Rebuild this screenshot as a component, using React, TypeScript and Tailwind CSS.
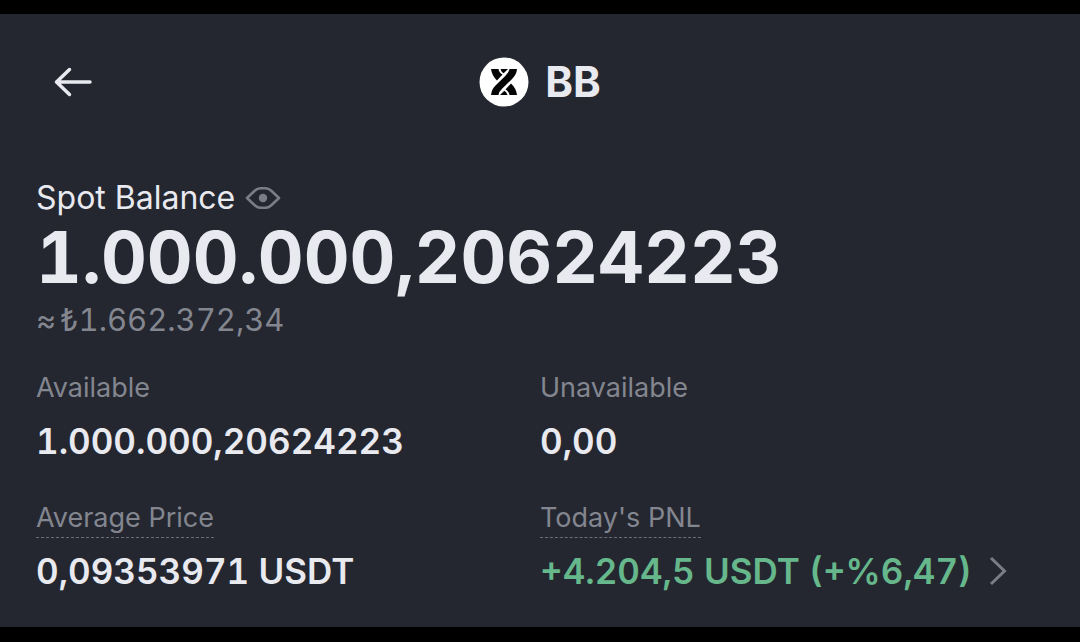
import type { ReactNode } from 'react';
import { clsx } from 'clsx';

function BackIcon() {
  return (
    <svg viewBox="0 0 40 32" className="h-8 w-10" fill="none" stroke="currentColor" strokeWidth="3.5" strokeLinecap="round" strokeLinejoin="round" aria-hidden="true">
      <path d="M15.5 3.5 2.5 16l13 12.500M3 16h33" />
    </svg>
  );
}

function CoinLogo() {
  return (
    <svg viewBox="0 0 50 50" className="size-[50px]" fill="none" aria-hidden="true">
      <circle cx="25" cy="25" r="24.5" fill="#fff" />
      <g fill="#050505">
        <path d="M12 12h7.500q.5 3.500 4 5.500l-5.500 6q-5-4.500-6-11.500z" />
        <path d="M21.500 12h7.500l-4.300 4.300q-2.500-1.300-3.200-4.300z" />
        <path d="M38 38h-7.500q-.5-3.500-4-5.500l5.500-6q5 4.500 6 11.500z" />
        <path d="M28.500 38h-7.500l4.300-4.300q2.500 1.300 3.200 4.300z" />
        <path d="M30.500 12H38q-.5 5.500-4.500 9.500l-10 9.800q-3.500 3.200-4 6.700H12q.5-5.500 4.500-9.500l10-9.800q3.500-3.200 4-6.700z" />
      </g>
    </svg>
  );
}

function EyeIcon() {
  return (
    <svg viewBox="0 0 36 24" className="h-6 w-9" fill="none" aria-hidden="true">
      <path d="M2 12 10 4.500Q12.500 2.200 15.500 2.200h5Q23.500 2.200 26 4.500L34 12l-8 7.500q-2.500 2.300-5.500 2.300h-5q-3 0-5.500-2.300z" stroke="currentColor" strokeWidth="2.600" strokeLinejoin="round" />
      <circle cx="18" cy="12" r="4.200" fill="currentColor" />
    </svg>
  );
}

function ChevronIcon() {
  return (
    <svg viewBox="0 0 20 32" className="h-8 w-5" fill="none" stroke="currentColor" strokeWidth="3" aria-hidden="true">
      <path d="m3 3 13.500 13L3 29" />
    </svg>
  );
}

interface StatProps {
  label: string;
  hint?: boolean;
  children: ReactNode;
}

function Stat({ label, hint, children }: StatProps) {
  return (
    <div>
      <dt className="h-10 text-[27px] leading-8 text-[#83868f]">
        <span className={clsx('inline-block', hint && 'h-9 border-b border-dashed border-[#6b6e78]')}>
          {label}
        </span>
      </dt>
      <dd className="mt-2 text-[35px] font-semibold leading-[42px] tabular-nums">{children}</dd>
    </div>
  );
}

export default function App() {
  return (
    <main className="flex min-h-screen flex-col border-t-[14px] border-b-[15px] border-black bg-[#242730] font-['Inter','Liberation_Sans',sans-serif] text-[#e9eaf0]">
      <header className="grid h-[136px] grid-cols-[1fr_auto_1fr] items-center px-[54px]">
        <button type="button" aria-label="Back" className="w-fit">
          <BackIcon />
        </button>
        <h1 className="flex items-center gap-4 text-[42px] font-bold leading-none">
          <CoinLogo />
          BB
        </h1>
      </header>

      <section className="px-9 pt-7">
        <div className="flex items-center gap-[10px] text-[32px] leading-10">
          <span>Spot Balance</span>
          <button type="button" aria-label="Hide balance" className="text-[#7a7d87]">
            <EyeIcon />
          </button>
        </div>
        <p className="text-[71px] font-bold leading-[78px] tabular-nums">1.000.000,20624223</p>
        <p className="mt-1 flex gap-1 text-[31px] leading-10 tabular-nums text-[#83868f]">
          <span>≈</span>
          <span>₺1.662.372,34</span>
        </p>

        <dl className="mt-8 grid grid-cols-2 gap-y-10">
          <Stat label="Available">1.000.000,20624223</Stat>
          <Stat label="Unavailable">0,00</Stat>
          <Stat label="Average Price" hint>
            0,09353971 USDT
          </Stat>
          <Stat label="Today's PNL" hint>
            <a href="#pnl" className="flex items-center gap-4 whitespace-nowrap text-[#66b78b]">
              +4.204,5 USDT (+%6,47)
              <span className="text-[#7a7d87]">
                <ChevronIcon />
              </span>
            </a>
          </Stat>
        </dl>
      </section>
    </main>
  );
}
